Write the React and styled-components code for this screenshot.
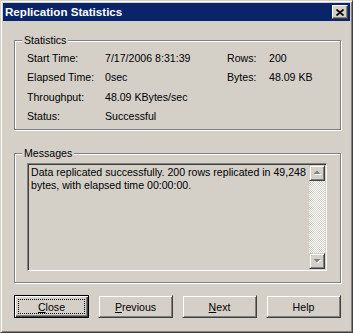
import React from "react";
import styled, { createGlobalStyle } from "styled-components";

const Global = createGlobalStyle`
  html, body { margin: 0; padding: 0; background: #d4d0c8; }
  body { font-family: "Liberation Sans", Arial, sans-serif; font-size: 10.6px; color: #000; }
  * { box-sizing: border-box; }
`;

const Window = styled.div`
  width: 353px;
  height: 333px;
  background: #d4d0c8;
  border: 1px solid;
  border-color: #d4d0c8 #404040 #404040 #d4d0c8;
  box-shadow: inset 1px 1px #fff, inset -1px -1px #808080;
  padding: 2px;
  display: flex;
  flex-direction: column;
`;

const TitleBar = styled.div`
  height: 18px;
  background: #0a246a;
  display: flex;
  align-items: center;
  justify-content: space-between;
  padding: 0 2px 0 2px;
`;

const Title = styled.span`
  color: #fff;
  font-weight: bold;
  font-size: 11.6px;
  line-height: 18px;
`;

const TitleButton = styled.div`
  width: 16px;
  height: 14px;
  background: #d4d0c8;
  border: 1px solid;
  border-color: #fff #404040 #404040 #fff;
  box-shadow: inset -1px -1px #808080;
  display: flex;
  align-items: center;
  justify-content: center;
  padding-right: 1px;
`;

const Body = styled.div`
  flex: 1;
  display: flex;
  flex-direction: column;
  padding: 19px 9px 0 11px;
`;

const GroupBox = styled.div`
  position: relative;
  width: 327px;
  height: ${(p) => p.$h}px;
  margin-top: ${(p) => p.$mt || 0}px;
  border: 1px solid #808080;
  box-shadow: inset 1px 1px #fff, 1px 1px #fff;
  padding: ${(p) => p.$pad};
`;

const Legend = styled.span`
  position: absolute;
  top: -7px;
  left: 7px;
  padding: 0 2px;
  background: #d4d0c8;
  line-height: 13px;
`;

const StatsGrid = styled.div`
  display: grid;
  grid-template-columns: 78px 122px 42px auto;
  grid-auto-rows: 19.5px;
  align-items: center;
`;

const Cell = styled.span`
  white-space: nowrap;
`;

const TextBox = styled.div`
  width: 300px;
  height: 108px;
  border: 1px solid;
  border-color: #808080 #fff #fff #808080;
  box-shadow: inset 1px 1px #404040, inset -1px -1px #d4d0c8;
  padding: 1px;
  display: flex;
`;

const MessageText = styled.div`
  flex: 1;
  padding: 1px 0 0 2px;
  line-height: 13px;
`;

const ScrollBar = styled.div`
  width: 16px;
  display: flex;
  flex-direction: column;
  justify-content: space-between;
  background-color: #d4d0c8;
  background-image: repeating-conic-gradient(#fff 0 25%, #d4d0c8 0 50%);
  background-size: 2px 2px;
`;

const ArrowButton = styled.div`
  width: 16px;
  height: 16px;
  background: #d4d0c8;
  border: 1px solid;
  border-color: #d4d0c8 #404040 #404040 #d4d0c8;
  box-shadow: inset 1px 1px #fff, inset -1px -1px #808080;
  display: flex;
  align-items: center;
  justify-content: center;
`;

const ButtonRow = styled.div`
  display: flex;
  gap: 9px;
  margin-top: 12px;
`;

const Button = styled.div`
  width: 75px;
  height: 23px;
  background: #d4d0c8;
  border: 1px solid ${(p) => (p.$default ? "#000" : "#d4d0c8")};
  border-right-color: #000;
  border-bottom-color: ${(p) => (p.$default ? "#000" : "#404040")};
  border-right-color: ${(p) => (p.$default ? "#000" : "#404040")};
  box-shadow: ${(p) =>
    p.$default
      ? "inset 1px 1px #fff, inset -1px -1px #404040, inset -2px -2px #808080"
      : "inset 1px 1px #fff, inset -1px -1px #808080"};
  display: flex;
  align-items: center;
  justify-content: center;
  padding: 3px;
`;

const Focus = styled.div`
  flex: 1;
  align-self: stretch;
  display: flex;
  align-items: center;
  justify-content: center;
  outline: ${(p) => (p.$on ? "1px dotted #000" : "none")};
  outline-offset: -1px;
  line-height: 13px;
  padding-top: 1px;
`;

const Key = styled.span`
  text-decoration: underline;
`;

const CloseGlyph = () => (
  <svg width="8" height="7" viewBox="0 0 8 7">
    <path d="M0.5 0.5 L7.5 6.5 M7.5 0.5 L0.5 6.5" stroke="#000" strokeWidth="1.7" fill="none" />
  </svg>
);

const Arrow = ({ down }) => (
  <svg width="9" height="6" viewBox="0 0 9 6">
    {down ? (
      <>
        <polygon points="1.5,2 8.5,2 5,5.5" fill="#fff" />
        <polygon points="0.5,1 7.5,1 4,4.5" fill="#808080" />
      </>
    ) : (
      <>
        <polygon points="5,1.5 8.5,5 1.5,5" fill="#fff" />
        <polygon points="4,0.5 7.5,4 0.5,4" fill="#808080" />
      </>
    )}
  </svg>
);

const stats = [
  ["Start Time:", "7/17/2006 8:31:39", "Rows:", "200"],
  ["Elapsed Time:", "0sec", "Bytes:", "48.09 KB"],
  ["Throughput:", "48.09 KBytes/sec", "", ""],
  ["Status:", "Successful", "", ""],
];

export default function App() {
  return (
    <>
      <Global />
      <Window>
        <TitleBar>
          <Title>Replication Statistics</Title>
          <TitleButton>
            <CloseGlyph />
          </TitleButton>
        </TitleBar>
        <Body>
          <GroupBox $h={90} $pad="7px 0 0 12px">
            <Legend>Statistics</Legend>
            <StatsGrid>
              {stats.map((r, i) =>
                r.map((c, j) => <Cell key={`${i}-${j}`}>{c}</Cell>)
              )}
            </StatsGrid>
          </GroupBox>
          <GroupBox $h={130} $mt={23} $pad="9px 0 0 12px">
            <Legend>Messages</Legend>
            <TextBox>
              <MessageText>
                Data replicated successfully. 200 rows replicated in 49,248 bytes, with elapsed time 00:00:00.
              </MessageText>
              <ScrollBar>
                <ArrowButton>
                  <Arrow />
                </ArrowButton>
                <ArrowButton>
                  <Arrow down />
                </ArrowButton>
              </ScrollBar>
            </TextBox>
          </GroupBox>
          <ButtonRow>
            <Button $default>
              <Focus $on>
                <span><Key>C</Key>lose</span>
              </Focus>
            </Button>
            <Button>
              <Focus>
                <span><Key>P</Key>revious</span>
              </Focus>
            </Button>
            <Button>
              <Focus>
                <span><Key>N</Key>ext</span>
              </Focus>
            </Button>
            <Button>
              <Focus>
                <span>Help</span>
              </Focus>
            </Button>
          </ButtonRow>
        </Body>
      </Window>
    </>
  );
}
